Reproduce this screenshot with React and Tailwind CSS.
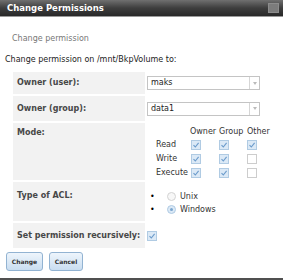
import React from 'react';

const Check = ({ on }) => (
  <span
    className={`inline-flex items-center justify-center w-[10px] h-[10px] border ${
      on ? 'border-[#b0cbe3] bg-[#dbe9f6]' : 'border-[#cdcdcd] bg-white'
    }`}
  >
    {on && (
      <svg width="8" height="8" viewBox="0 0 8 8">
        <path d="M1.5 4.2 L3.3 6 L6.6 1.8" fill="none" stroke="#6b9bcb" strokeWidth="1.1" />
      </svg>
    )}
  </span>
);

const Radio = ({ on }) => (
  <span
    className={`inline-flex items-center justify-center w-[9px] h-[9px] rounded-full border ${
      on ? 'border-[#b0cbe3] bg-[#dbe9f6]' : 'border-[#d3d3d3] bg-[#f7f7f7]'
    }`}
  >
    {on && <span className="w-[3px] h-[3px] rounded-full bg-[#7ba6cf]" />}
  </span>
);

const Select = ({ value }) => (
  <div className="flex w-[113px] h-[14px] border border-[#c4c4c4] bg-white">
    <div className="flex-1 pl-[3px] leading-[12px] text-[8px] text-[#222]">{value}</div>
    <div className="w-[10px] border-l border-[#d6d6d6] flex items-center justify-center">
      <span className="w-0 h-0 border-l-[2.5px] border-r-[2.5px] border-t-[3px] border-l-transparent border-r-transparent border-t-[#bbb]" />
    </div>
  </div>
);

const Label = ({ children, className = '' }) => (
  <div className={`w-[132px] bg-[#f2f2f2] pl-[4px] text-[8px] font-bold text-[#474747] ${className}`}>
    {children}
  </div>
);

const modeRows = [
  { name: 'Read', v: [true, true, true] },
  { name: 'Write', v: [true, true, false] },
  { name: 'Execute', v: [true, true, false] },
];

export default function App() {
  return (
    <div className="w-[283px] h-[280px] bg-white flex flex-col overflow-hidden font-['DejaVu_Sans',sans-serif]">
      <div className="h-[17px] flex items-center justify-between pl-[7px] pr-[4px] bg-linear-to-b from-[#707070] via-[#3e3e3e] to-[#282828] border-b border-[#9a9a9a]">
        <span className="text-white text-[8.5px] font-bold leading-none">Change Permissions</span>
        <span className="w-[11px] h-[10px] bg-[#7c7c7c] border border-[#8c8c8c]" />
      </div>

      <div className="pl-[12px] mt-[17px] text-[8px] leading-[10px] text-[#777]">Change permission</div>
      <div className="pl-[5px] mt-[11px] text-[8px] leading-[10px] text-[#222]">
        Change permission on /mnt/BkpVolume to:
      </div>

      <div className="ml-[13px] mt-[7px] flex flex-col gap-[2px]">
        <div className="flex h-[22px]">
          <Label className="flex items-center">Owner (user):</Label>
          <div className="pl-[2px] flex items-center">
            <Select value="maks" />
          </div>
        </div>
        <div className="flex h-[25px]">
          <Label className="flex items-center">Owner (group):</Label>
          <div className="pl-[2px] flex items-center">
            <Select value="data1" />
          </div>
        </div>
        <div className="flex h-[57px]">
          <Label className="pt-[5px] leading-[10px]">Mode:</Label>
          <div className="pl-[11px] pt-[2px] text-[8px] text-[#333]">
            <div className="grid grid-cols-[35px_28px_28px_28px] h-[13px] items-center">
              <span />
              <span className="-ml-[1px]">Owner</span>
              <span>Group</span>
              <span>Other</span>
            </div>
            {modeRows.map((r) => (
              <div key={r.name} className="grid grid-cols-[35px_28px_28px_28px] h-[14px] items-center">
                <span>{r.name}</span>
                {r.v.map((on, i) => (
                  <Check key={i} on={on} />
                ))}
              </div>
            ))}
          </div>
        </div>
        <div className="flex h-[39px]">
          <Label className="pt-[9px] leading-[10px]">Type of ACL:</Label>
          <div className="pl-[4px] pt-[8px] text-[8px] text-[#333]">
            {[['Unix', false], ['Windows', true]].map(([t, on]) => (
              <div key={t} className="flex items-center h-[13px]">
                <span className="w-[18px] pl-[1px] text-black">•</span>
                <Radio on={on} />
                <span className="ml-[4px]">{t}</span>
              </div>
            ))}
          </div>
        </div>
        <div className="flex h-[25px]">
          <Label className="flex items-center pt-[1px]">Set permission recursively:</Label>
          <div className="pl-[2px] pt-[1px] flex items-center">
            <Check on />
          </div>
        </div>
      </div>

      <div className="flex gap-[6px] pl-[6px] mt-[4px]">
        <button className="w-[37px] h-[19px] rounded-[3px] border border-[#92b3d2] bg-linear-to-b from-[#eef5fc] to-[#c9ddf0] text-[6px] font-bold text-[#333]">
          Change
        </button>
        <button className="w-[34px] h-[19px] rounded-[3px] border border-[#92b3d2] bg-linear-to-b from-[#eef5fc] to-[#c9ddf0] text-[6px] font-bold text-[#333]">
          Cancel
        </button>
      </div>

      <div className="mt-auto h-[2px] bg-[#505050]" />
    </div>
  );
}
